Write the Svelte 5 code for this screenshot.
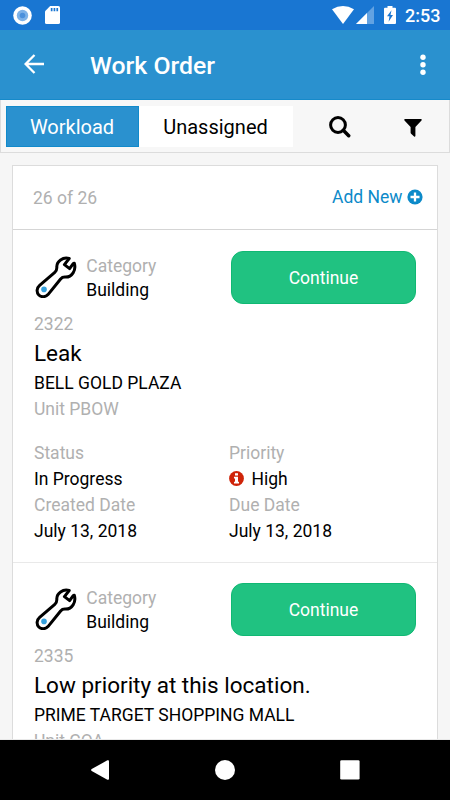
<script>
  const orders = [
    { id: '2322', title: 'Leak', place: 'BELL GOLD PLAZA', unit: 'Unit PBOW', status: 'In Progress', priority: 'High', created: 'July 13, 2018', due: 'July 13, 2018' },
    { id: '2335', title: 'Low priority at this location.', place: 'PRIME TARGET SHOPPING MALL', unit: 'Unit COA' }
  ];
</script>

<div class="screen">
  <div class="status">
    <svg width="19" height="19" viewBox="0 0 19 19"><circle cx="9.5" cy="9.5" r="9.3" fill="#fff"/><circle cx="9.5" cy="9.5" r="5.7" fill="#7db2e8"/><circle cx="9.5" cy="9.5" r="2.8" fill="#4a90dc"/></svg>
    <svg class="sd" width="15" height="18" viewBox="0 0 15 18"><path d="M5.2 0H13.4Q15 0 15 1.6V16.4Q15 18 13.4 18H1.6Q0 18 0 16.4V5.3Z" fill="#fff"/><path d="M5.8 2h1.7v3.3H5.8zM8.6 2h1.7v3.3H8.6zM11.4 2h1.7v3.3h-1.7z" fill="#1976d2"/></svg>
    <span class="grow"></span>
    <svg class="wifi" width="22" height="18" viewBox="0 0 22 18"><path d="M0 3.3Q11-3.3 22 3.3L11 18Z" fill="#fff"/></svg>
    <svg class="cell" width="18" height="18" viewBox="0 0 18 18"><path d="M18 0V18H0Z" fill="#62a2e2"/><path d="M11 7V18H0Z" fill="#fff"/></svg>
    <svg class="battery" width="12" height="18" viewBox="0 0 12 18"><path d="M3.5 0h5v1.7H11q1 0 1 1V17q0 1-1 1H1q-1 0-1-1V2.7q0-1 1-1H3.5Z" fill="#fff"/><path d="M7.5 4.2 3 10.2H5.5L4.6 15.7 9 9H6.5Z" fill="#1976d2"/></svg>
    <span class="time">2:53</span>
  </div>

  <header>
    <svg class="back" width="20" height="20" viewBox="0 0 20 20"><path d="M10.5 1 1.6 10l8.9 9M1.8 10H20" fill="none" stroke="#fff" stroke-width="2.3"/></svg>
    <h1>Work Order</h1>
    <svg width="6" height="22" viewBox="0 0 6 22"><circle cx="3" cy="3.3" r="2.7" fill="#fff"/><circle cx="3" cy="10.8" r="2.7" fill="#fff"/><circle cx="3" cy="18.3" r="2.7" fill="#fff"/></svg>
  </header>

  <nav>
    <span class="tab active">Workload</span>
    <span class="tab other">Unassigned</span>
    <svg class="search" width="22" height="22" viewBox="0 0 22 22"><circle cx="9" cy="9" r="7.4" fill="none" stroke="#000" stroke-width="3"/><path d="m14.3 14.3 5.4 5.4" stroke="#000" stroke-width="3.5" stroke-linecap="round"/></svg>
    <svg class="filter" width="18" height="18" viewBox="0 0 18 18"><path d="M.8 0H17.2Q18.2.6 17.5 1.5L11.4 8V17Q11 18 10.1 17.4L7.1 14.8Q6.6 14.4 6.6 13.7V8L.5 1.5Q-.2.6.8 0Z"/></svg>
  </nav>

  <main>
    <div class="list">
      <div class="summary">
        <span class="muted">26 of 26</span>
        <span class="add">Add New
          <svg width="16" height="16" viewBox="0 0 16 16"><circle cx="8" cy="8" r="7.6" fill="#0c8ac9"/><path d="M8 3.5v9M3.5 8h9" stroke="#fff" stroke-width="2.3"/></svg>
        </span>
      </div>
      {#each orders as order}
        <article>
          <div class="top">
            <svg class="wrench" width="42" height="42" viewBox="0 0 42 42">
              <path d="M34.2 2.5C28 .8 21.5 5 21.8 11.3Q22 14.4 19.8 16.3L4.6 29.4C1.6 32 1.3 36.5 3.8 39C6.3 41.4 10.6 41.2 13 38.6L25.6 23Q27.4 20.9 30.4 21.1C37 21.3 41.4 14.2 39.3 7.2L38.2 7.6L34.6 12.6L29.4 8.6Z" fill="#fff" stroke="#000" stroke-width="3" stroke-linejoin="round"/>
              <circle cx="9" cy="33.4" r="2.8" fill="#36a2df"/>
            </svg>
            <div class="category"><p class="muted">Category</p><p>Building</p></div>
            <button>Continue</button>
          </div>
          <p class="muted">{order.id}</p>
          <h2>{order.title}</h2>
          <p class="place">{order.place}</p>
          <p class="muted">{order.unit}</p>
          {#if order.status}
            <div class="details">
              <div>
                <p class="muted">Status</p><p>{order.status}</p>
                <p class="muted">Created Date</p><p>{order.created}</p>
              </div>
              <div>
                <p class="muted">Priority</p>
                <p class="priority"><svg width="15" height="15" viewBox="0 0 15 15"><circle cx="7.5" cy="7.5" r="7.4" fill="#cf2409"/><path d="M6 2.2h3v2.2H6zM5 5.7h4v5h1v1.8H5v-1.8h1V7.5H5z" fill="#fff"/></svg>{order.priority}</p>
                <p class="muted">Due Date</p><p>{order.due}</p>
              </div>
            </div>
          {/if}
        </article>
      {/each}
    </div>
  </main>

  <footer>
    <svg width="18" height="20" viewBox="0 0 18 20"><path d="M16.4.3Q18-.3 18 1.2V18.8Q18 20.3 16.4 19.7L.7 10.9Q-.5 10 .7 9.1Z" fill="#fff"/></svg>
    <svg width="20" height="20" viewBox="0 0 20 20"><circle cx="10" cy="10" r="10" fill="#fff"/></svg>
    <svg width="20" height="20" viewBox="0 0 20 20"><rect x=".2" y=".2" width="19.4" height="19.4" rx="1.3" fill="#fff"/></svg>
  </footer>
</div>

<style>
  :global(body) { margin: 0; }
  .screen { width: 450px; height: 800px; overflow: hidden; display: flex; flex-direction: column; background: #f6f6f6; color: #000; font-family: Roboto, sans-serif; font-size: 17.5px; }
  .screen * { box-sizing: border-box; }
  svg { display: block; flex: none; }
  p, h1, h2 { margin: 0; font-weight: 400; white-space: nowrap; }
  .status { flex: none; height: 30px; display: flex; align-items: center; padding: 0 10px 0 13px; background: #1976d2; }
  .sd { margin-left: 13px; }
  .grow { flex: 1; }
  .cell { margin-left: 2px; }
  .battery { margin: 0 9px 0 10px; }
  .time { width: 35px; color: #fff; font-size: 18px; font-weight: 500; line-height: 31px; }
  header { flex: none; height: 70px; display: flex; align-items: center; padding: 0 24.5px 0 24px; background: #2a91cf; border-bottom: 1px solid #168aca; }
  .back { margin-top: -1px; }
  h1 { flex: 1; margin: 2px 0 0 46px; color: #fff; font-size: 24.8px; line-height: 32px; font-weight: 500; }
  nav { flex: none; height: 53px; display: flex; align-items: center; padding-left: 5px; border: 1px solid #dcdcdc; border-top: 0; background: #f7f7f7; }
  .tab { height: 41px; line-height: 42px; font-size: 20px; text-align: center; }
  .active { width: 133px; padding-right: 1px; color: #fff; background: #2a91cf; border: 1px solid #118acb; line-height: 40px; }
  .other { width: 154px; padding-right: 1px; background: #fff; }
  .search { margin: 2px 0 0 36px; }
  .filter { margin: 3px 0 0 52.5px; }
  main { flex: 1; min-height: 0; overflow: hidden; padding: 12px 12px 0; border-bottom: 1px solid #e9e9e9; }
  .list { background: #fff; border: 1px solid #dcdcdc; }
  .summary { height: 64px; display: flex; justify-content: space-between; align-items: center; padding: 0 14px 0 20px; border-bottom: 1px solid #d5d5d5; }
  .muted { color: #b0b0b0; }
  .add { display: flex; align-items: center; gap: 4.5px; color: #0c8ac9; margin-top: -1px; }
  article { height: 332.5px; padding: 20.6px 21px 0 21px; border-bottom: 1px solid #e9e9e9; }
  p { height: 26px; line-height: 26px; }
  .top { height: 60.4px; display: flex; align-items: flex-start; }
  .wrench { margin: 5.4px 0 0 1px; }
  .category { flex: 1; margin: 3.4px 0 0 9.3px; }
  .category p { height: 24px; line-height: 24px; }
  button { width: 185px; height: 53px; padding: 1px 0 0; border: 1px solid #10b873; border-radius: 12px; background: #20c281; color: #fff; font: inherit; }
  h2 { height: 33px; line-height: 33px; font-size: 22.5px; }
  .details { display: flex; margin-top: 18px; }
  .details > div:first-child { width: 195px; }
  .priority { display: flex; align-items: center; gap: 7.5px; }
  footer { flex: none; height: 60px; display: flex; align-items: center; justify-content: space-between; padding: 0 90px 0 91px; background: #000; }
</style>
